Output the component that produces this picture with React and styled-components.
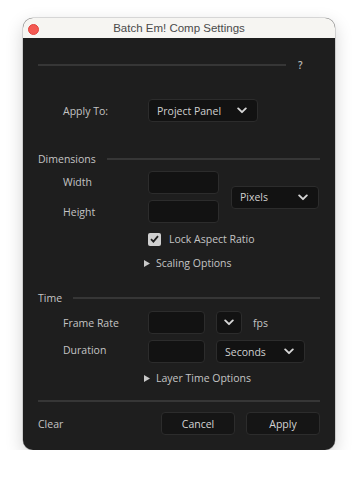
import React from "react";
import styled, { createGlobalStyle } from "styled-components";

const GlobalStyle = createGlobalStyle`
	body {
		margin: 0;
		background: #ffffff;
		font-family: "Open Sans", "Liberation Sans", sans-serif;
	}
`;

const Chevron = () => (
	<svg width="10" height="7" viewBox="0 0 10 7">
		<polyline points="1.2,1.4 5,5.2 8.8,1.4" fill="none" stroke="#d6d6d6" strokeWidth="1.9" strokeLinecap="round" strokeLinejoin="round" />
	</svg>
);

const Triangle = () => (
	<svg width="6" height="7" viewBox="0 0 6 7">
		<polygon points="0,0 6,3.5 0,7" fill="#c8c8c8" />
	</svg>
);

const Select = ({ label, width }) => (
	<SelectBox $width={width}>
		{label && <span>{label}</span>}
		<Chevron />
	</SelectBox>
);

const App = () => {
	return (
		<>
			<GlobalStyle />
			<Page>
				<Window>
					<TitleBar>
						<CloseDot />
						<Title>Batch Em! Comp Settings</Title>
					</TitleBar>
					<Content>
						<TopRow>
							<Rule />
							<Help>?</Help>
						</TopRow>

						<FieldRow $mt={29}>
							<Label>Apply To:</Label>
							<Select label="Project Panel" width={110} />
						</FieldRow>

						<SectionHeader $mt={30}>
							<span>Dimensions</span>
							<Rule />
						</SectionHeader>

						<DimGrid>
							<DimRows>
								<FieldRow>
									<Label $up={1}>Width</Label>
									<Input $width={71} />
								</FieldRow>
								<FieldRow>
									<Label>Height</Label>
									<Input $width={71} />
								</FieldRow>
							</DimRows>
							<Select label="Pixels" width={88} />
						</DimGrid>

						<CheckRow>
							<CheckBox>
								<svg width="9" height="8" viewBox="0 0 9 8">
									<polyline points="1,4.2 3.4,6.6 8,1.2" fill="none" stroke="#1e1e1e" strokeWidth="1.8" />
								</svg>
							</CheckBox>
							<span>Lock Aspect Ratio</span>
						</CheckRow>

						<Disclosure $mt={9}>
							<Triangle />
							<span>Scaling Options</span>
						</Disclosure>

						<SectionHeader $mt={21}>
							<span>Time</span>
							<Rule />
						</SectionHeader>

						<FieldRow $mt={6}>
							<Label>Frame Rate</Label>
							<Input $width={57} />
							<Select width={26} />
							<Unit>fps</Unit>
						</FieldRow>
						<FieldRow $mt={6}>
							<Label $up={2}>Duration</Label>
							<Input $width={57} />
							<Select label="Seconds" width={89} />
						</FieldRow>

						<Disclosure $mt={8}>
							<Triangle />
							<span>Layer Time Options</span>
						</Disclosure>

						<FooterRule />

						<Footer>
							<ClearText>Clear</ClearText>
							<Buttons>
								<Button>Cancel</Button>
								<Button>Apply</Button>
							</Buttons>
						</Footer>
					</Content>
				</Window>
			</Page>
		</>
	);
};

const Page = styled.div`
	padding: 18px 0 0 23px;
`;

const Window = styled.div`
	width: 312px;
	height: 432px;
	border-radius: 10px;
	overflow: hidden;
	background: #1e1e1e;
	box-shadow: 0 0 0 0.5px rgba(0, 0, 0, 0.25), 0 6px 18px rgba(0, 0, 0, 0.18);
	display: flex;
	flex-direction: column;
`;

const TitleBar = styled.div`
	height: 20px;
	background: #f6f5f2;
	display: flex;
	align-items: center;
	justify-content: center;
	position: relative;
`;

const CloseDot = styled.div`
	position: absolute;
	left: 5px;
	top: 5.5px;
	width: 9px;
	height: 9px;
	border-radius: 50%;
	background: #f45952;
	border: 0.5px solid #e0443e;
`;

const Title = styled.div`
	font-family: "Liberation Sans", "Open Sans", sans-serif;
	font-size: 11.5px;
	color: #4a4a4a;
`;

const Content = styled.div`
	padding: 0 15px;
	color: #c4c4c4;
	font-size: 10.5px;
`;

const TopRow = styled.div`
	margin-top: 22px;
	height: 10px;
	display: flex;
	align-items: center;
`;

const Rule = styled.div`
	flex: 1;
	height: 2px;
	background: #363636;
`;

const Help = styled.span`
	width: 34px;
	padding-left: 12px;
	box-sizing: border-box;
	font-size: 10px;
	font-weight: 600;
	color: #bdbdbd;
`;

const FieldRow = styled.div`
	margin-top: ${(p) => p.$mt || 0}px;
	height: 23px;
	display: flex;
	align-items: center;
	padding-left: 25px;
	gap: 11px;
`;

const Label = styled.span`
	width: 74px;
	flex-shrink: 0;
	margin-top: ${(p) => -(p.$up || 0) * 2}px;
`;

const SelectBox = styled.div`
	width: ${(p) => p.$width}px;
	height: 23px;
	box-sizing: border-box;
	background: #121212;
	border: 1px solid #2c2c2c;
	border-radius: 4px;
	display: flex;
	align-items: center;
	justify-content: ${(p) => (p.$width < 40 ? "center" : "space-between")};
	padding: 0 ${(p) => (p.$width < 40 ? 0 : 10)}px 0 ${(p) => (p.$width < 40 ? 0 : 8)}px;
	color: #d0d0d0;
	flex-shrink: 0;
`;

const Input = styled.div`
	width: ${(p) => p.$width}px;
	height: 23px;
	box-sizing: border-box;
	background: #121212;
	border: 1px solid #2c2c2c;
	border-radius: 4px;
	flex-shrink: 0;
`;

const SectionHeader = styled.div`
	margin-top: ${(p) => p.$mt}px;
	height: 14px;
	display: flex;
	align-items: center;
	gap: 11px;
	color: #c4c4c4;
`;

const DimGrid = styled.div`
	margin-top: 5px;
	display: flex;
	align-items: center;
	gap: 12px;
`;

const DimRows = styled.div`
	display: flex;
	flex-direction: column;
	gap: 6px;
`;

const CheckRow = styled.div`
	margin-top: 8px;
	height: 16px;
	display: flex;
	align-items: center;
	gap: 8px;
	padding-left: 110px;
`;

const CheckBox = styled.div`
	width: 13px;
	height: 13px;
	border-radius: 2px;
	background: #cfcfcf;
	display: flex;
	align-items: center;
	justify-content: center;
`;

const Disclosure = styled.div`
	margin-top: ${(p) => p.$mt}px;
	height: 14px;
	display: flex;
	align-items: center;
	gap: 6px;
	padding-left: 106px;
`;

const Unit = styled.span`
	color: #c4c4c4;
`;

const FooterRule = styled.div`
	margin-top: 15px;
	height: 2px;
	background: #363636;
`;

const Footer = styled.div`
	margin-top: 10px;
	display: flex;
	align-items: center;
	justify-content: space-between;
`;

const ClearText = styled.span`
	color: #c4c4c4;
`;

const Buttons = styled.div`
	display: flex;
	gap: 11px;
`;

const Button = styled.div`
	width: 74px;
	height: 23px;
	box-sizing: border-box;
	border: 1px solid #2c2c2c;
	border-radius: 4px;
	background: #151515;
	color: #d4d4d4;
	display: flex;
	align-items: center;
	justify-content: center;
`;

export default App;
